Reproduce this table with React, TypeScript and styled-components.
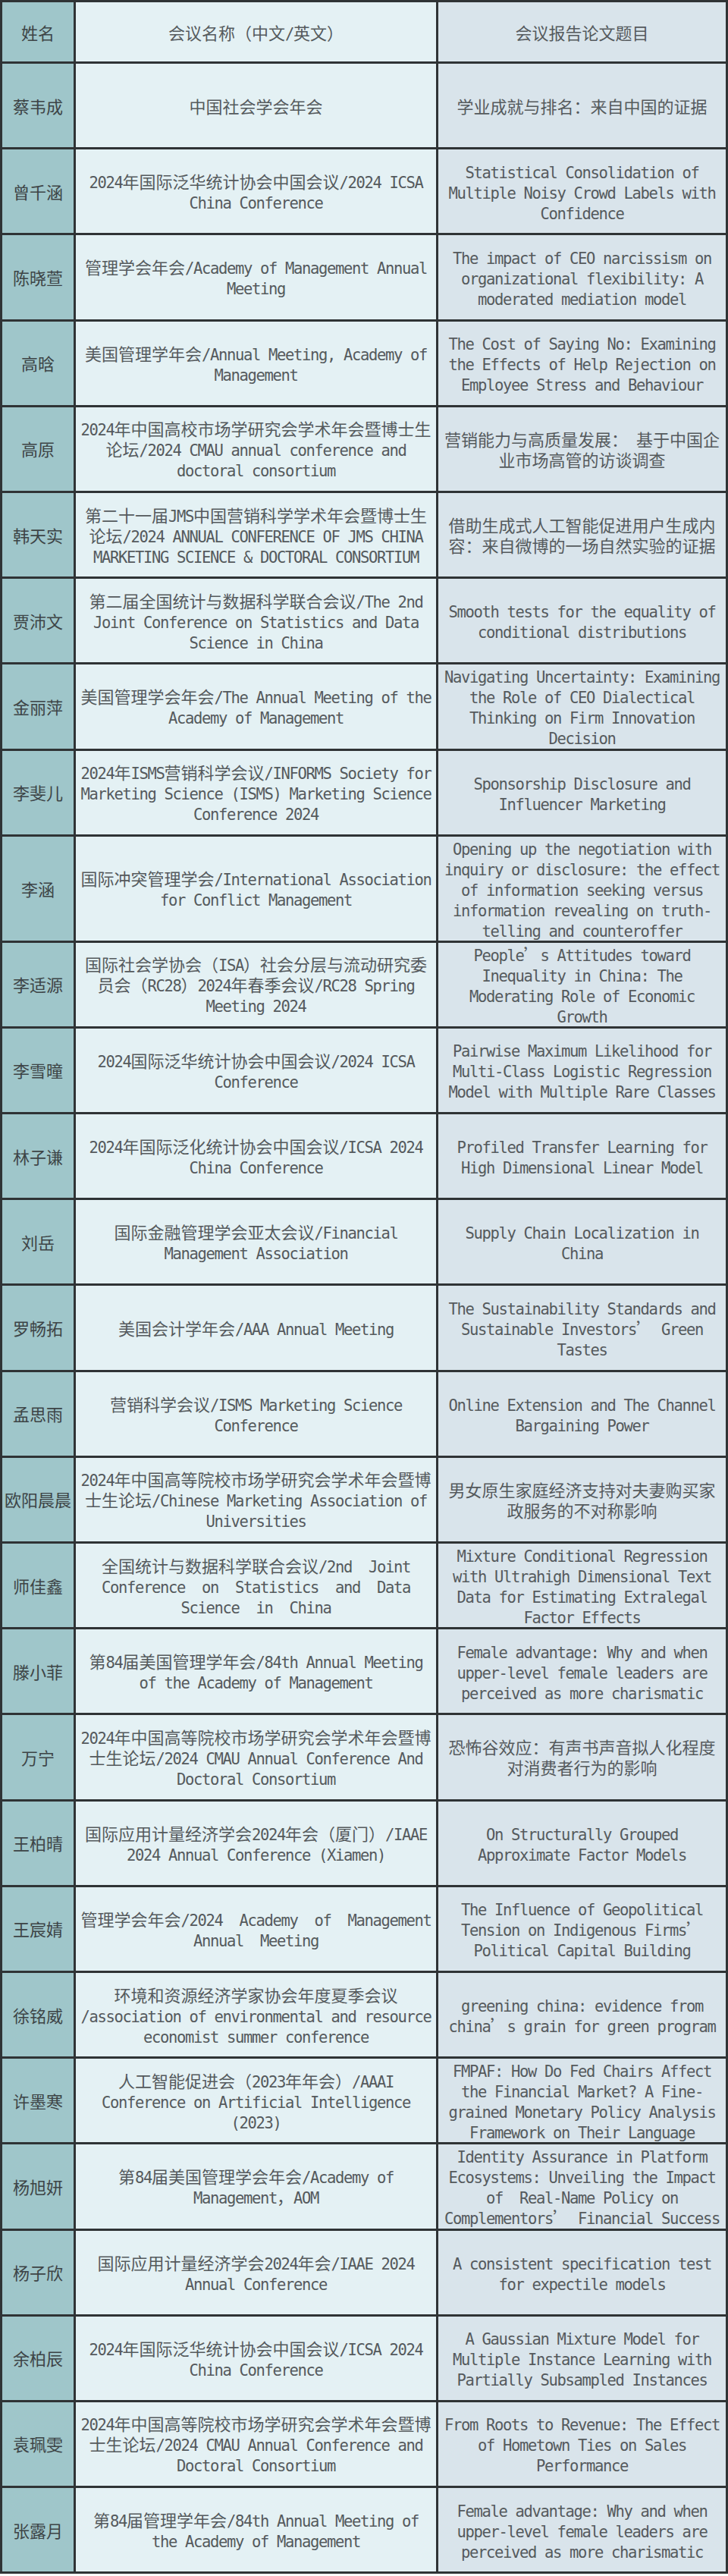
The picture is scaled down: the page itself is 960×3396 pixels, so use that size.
import React from "react";
import styled, { createGlobalStyle } from "styled-components";

const GlobalStyle = createGlobalStyle`
  html, body { margin: 0; padding: 0; background: #ffffff; }
  body { width: 960px; }
`;

const Table = styled.div`
  display: grid;
  grid-template-columns: 94px 475px 379px;
  grid-template-rows: 78px;
  grid-auto-rows: minmax(110.2px, auto);
  gap: 3px;
  padding: 3px;
  width: 960px;
  box-sizing: border-box;
  background: #2f3335;
  font-family: "Noto Sans CJK SC", "DejaVu Sans", sans-serif;
`;

type Kind = "name" | "conf" | "title";

const bg: Record<Kind, string> = {
  name: "#9fc6ca",
  conf: "#e4f1f4",
  title: "#d9e4eb",
};

const Cell = styled.div<{ $kind: Kind }>`
  display: flex;
  flex-direction: column;
  align-items: center;
  justify-content: center;
  text-align: center;
  padding: 1px 0;
  background: ${(p) => bg[p.$kind]};
  color: ${(p) => (p.$kind === "name" ? "#3d4446" : "#555a5d")};
  font-size: 22px;
  line-height: 27px;
`;

const Line = styled.span`
  display: block;
  height: 27px;
  white-space: pre;
`;

const Latin = styled.span`
  font-family: "DejaVu Sans Mono", "Liberation Mono", monospace;
  font-size: 20.5px;
  line-height: 1;
  letter-spacing: -1.34px;
`;

type Row = { name: string; conf: string[]; title: string[] };

const rows: Row[] = [
  { name: "蔡韦成", conf: ["中国社会学会年会"], title: ["学业成就与排名：来自中国的证据"] },
  {
    name: "曾千涵",
    conf: ["2024年国际泛华统计协会中国会议/2024 ICSA", "China Conference"],
    title: ["Statistical Consolidation of", "Multiple Noisy Crowd Labels with", "Confidence"],
  },
  {
    name: "陈晓萱",
    conf: ["管理学会年会/Academy of Management Annual", "Meeting"],
    title: ["The impact of CEO narcissism on", "organizational flexibility: A", "moderated mediation model"],
  },
  {
    name: "高晗",
    conf: ["美国管理学年会/Annual Meeting, Academy of", "Management"],
    title: ["The Cost of Saying No: Examining", "the Effects of Help Rejection on", "Employee Stress and Behaviour"],
  },
  {
    name: "高原",
    conf: ["2024年中国高校市场学研究会学术年会暨博士生", "论坛/2024 CMAU annual conference and", "doctoral consortium"],
    title: ["营销能力与高质量发展： 基于中国企", "业市场高管的访谈调查"],
  },
  {
    name: "韩天实",
    conf: ["第二十一届JMS中国营销科学学术年会暨博士生", "论坛/2024 ANNUAL CONFERENCE OF JMS CHINA", "MARKETING SCIENCE & DOCTORAL CONSORTIUM"],
    title: ["借助生成式人工智能促进用户生成内", "容：来自微博的一场自然实验的证据"],
  },
  {
    name: "贾沛文",
    conf: ["第二届全国统计与数据科学联合会议/The 2nd", "Joint Conference on Statistics and Data", "Science in China"],
    title: ["Smooth tests for the equality of", "conditional distributions"],
  },
  {
    name: "金丽萍",
    conf: ["美国管理学会年会/The Annual Meeting of the", "Academy of Management"],
    title: ["Navigating Uncertainty: Examining", "the Role of CEO Dialectical", "Thinking on Firm Innovation", "Decision"],
  },
  {
    name: "李斐儿",
    conf: ["2024年ISMS营销科学会议/INFORMS Society for", "Marketing Science (ISMS) Marketing Science", "Conference 2024"],
    title: ["Sponsorship Disclosure and", "Influencer Marketing"],
  },
  {
    name: "李涵",
    conf: ["国际冲突管理学会/International Association", "for Conflict Management"],
    title: [
      "Opening up the negotiation with",
      "inquiry or disclosure: the effect",
      "of information seeking versus",
      "information revealing on truth-",
      "telling and counteroffer",
    ],
  },
  {
    name: "李适源",
    conf: ["国际社会学协会（ISA）社会分层与流动研究委", "员会（RC28）2024年春季会议/RC28 Spring", "Meeting 2024"],
    title: ["People\u2019s Attitudes toward", "Inequality in China: The", "Moderating Role of Economic", "Growth"],
  },
  {
    name: "李雪曈",
    conf: ["2024国际泛华统计协会中国会议/2024 ICSA", "Conference"],
    title: ["Pairwise Maximum Likelihood for", "Multi-Class Logistic Regression", "Model with Multiple Rare Classes"],
  },
  {
    name: "林子谦",
    conf: ["2024年国际泛化统计协会中国会议/ICSA 2024", "China Conference"],
    title: ["Profiled Transfer Learning for", "High Dimensional Linear Model"],
  },
  {
    name: "刘岳",
    conf: ["国际金融管理学会亚太会议/Financial", "Management Association"],
    title: ["Supply Chain Localization in", "China"],
  },
  {
    name: "罗畅拓",
    conf: ["美国会计学年会/AAA Annual Meeting"],
    title: ["The Sustainability Standards and", "Sustainable Investors\u2019 Green", "Tastes"],
  },
  {
    name: "孟思雨",
    conf: ["营销科学会议/ISMS Marketing Science", "Conference"],
    title: ["Online Extension and The Channel", "Bargaining Power"],
  },
  {
    name: "欧阳晨晨",
    conf: ["2024年中国高等院校市场学研究会学术年会暨博", "士生论坛/Chinese Marketing Association of", "Universities"],
    title: ["男女原生家庭经济支持对夫妻购买家", "政服务的不对称影响"],
  },
  {
    name: "师佳鑫",
    conf: ["全国统计与数据科学联合会议/2nd  Joint", "Conference  on  Statistics  and  Data", "Science  in  China"],
    title: ["Mixture Conditional Regression", "with Ultrahigh Dimensional Text", "Data for Estimating Extralegal", "Factor Effects"],
  },
  {
    name: "滕小菲",
    conf: ["第84届美国管理学年会/84th Annual Meeting", "of the Academy of Management"],
    title: ["Female advantage: Why and when", "upper-level female leaders are", "perceived as more charismatic"],
  },
  {
    name: "万宁",
    conf: ["2024年中国高等院校市场学研究会学术年会暨博", "士生论坛/2024 CMAU Annual Conference And", "Doctoral Consortium"],
    title: ["恐怖谷效应：有声书声音拟人化程度", "对消费者行为的影响"],
  },
  {
    name: "王柏晴",
    conf: ["国际应用计量经济学会2024年会（厦门）/IAAE", "2024 Annual Conference (Xiamen)"],
    title: ["On Structurally Grouped", "Approximate Factor Models"],
  },
  {
    name: "王宸婧",
    conf: ["管理学会年会/2024  Academy  of  Management", "Annual  Meeting"],
    title: ["The Influence of Geopolitical", "Tension on Indigenous Firms\u2019", "Political Capital Building"],
  },
  {
    name: "徐铭威",
    conf: ["环境和资源经济学家协会年度夏季会议", "/association of environmental and resource", "economist summer conference"],
    title: ["greening china: evidence from", "china\u2019s grain for green program"],
  },
  {
    name: "许墨寒",
    conf: ["人工智能促进会（2023年年会）/AAAI", "Conference on Artificial Intelligence", "(2023)"],
    title: ["FMPAF: How Do Fed Chairs Affect", "the Financial Market? A Fine-", "grained Monetary Policy Analysis", "Framework on Their Language"],
  },
  {
    name: "杨旭妍",
    conf: ["第84届美国管理学会年会/Academy of", "Management，AOM"],
    title: ["Identity Assurance in Platform", "Ecosystems: Unveiling the Impact", "of  Real-Name Policy on", "Complementors\u2019 Financial Success"],
  },
  {
    name: "杨子欣",
    conf: ["国际应用计量经济学会2024年会/IAAE 2024", "Annual Conference"],
    title: ["A consistent specification test", "for expectile models"],
  },
  {
    name: "余柏辰",
    conf: ["2024年国际泛华统计协会中国会议/ICSA 2024", "China Conference"],
    title: ["A Gaussian Mixture Model for", "Multiple Instance Learning with", "Partially Subsampled Instances"],
  },
  {
    name: "袁珮雯",
    conf: ["2024年中国高等院校市场学研究会学术年会暨博", "士生论坛/2024 CMAU Annual Conference and", "Doctoral Consortium"],
    title: ["From Roots to Revenue: The Effect", "of Hometown Ties on Sales", "Performance"],
  },
  {
    name: "张露月",
    conf: ["第84届管理学年会/84th Annual Meeting of", "the Academy of Management"],
    title: ["Female advantage: Why and when", "upper-level female leaders are", "perceived as more charismatic"],
  },
];

const WIDE = /([\u2018-\u201d\u3000-\u303f\u3400-\u9fff\uff00-\uffef]+)/;

function renderText(text: string) {
  return text
    .split(WIDE)
    .filter((part) => part.length > 0)
    .map((part, i) =>
      WIDE.test(part) ? (
        <React.Fragment key={i}>{part}</React.Fragment>
      ) : (
        <Latin key={i}>{part}</Latin>
      )
    );
}

function Lines({ lines }: { lines: string[] }) {
  return (
    <>
      {lines.map((l, i) => (
        <Line key={i}>{renderText(l)}</Line>
      ))}
    </>
  );
}

export default function App() {
  return (
    <>
      <GlobalStyle />
      <Table>
        <Cell $kind="name">
          <Line>姓名</Line>
        </Cell>
        <Cell $kind="conf">
          <Lines lines={["会议名称（中文/英文）"]} />
        </Cell>
        <Cell $kind="title">
          <Line>会议报告论文题目</Line>
        </Cell>
        {rows.map((r) => (
          <React.Fragment key={r.name}>
            <Cell $kind="name">
              <Line>{r.name}</Line>
            </Cell>
            <Cell $kind="conf">
              <Lines lines={r.conf} />
            </Cell>
            <Cell $kind="title">
              <Lines lines={r.title} />
            </Cell>
          </React.Fragment>
        ))}
      </Table>
    </>
  );
}
